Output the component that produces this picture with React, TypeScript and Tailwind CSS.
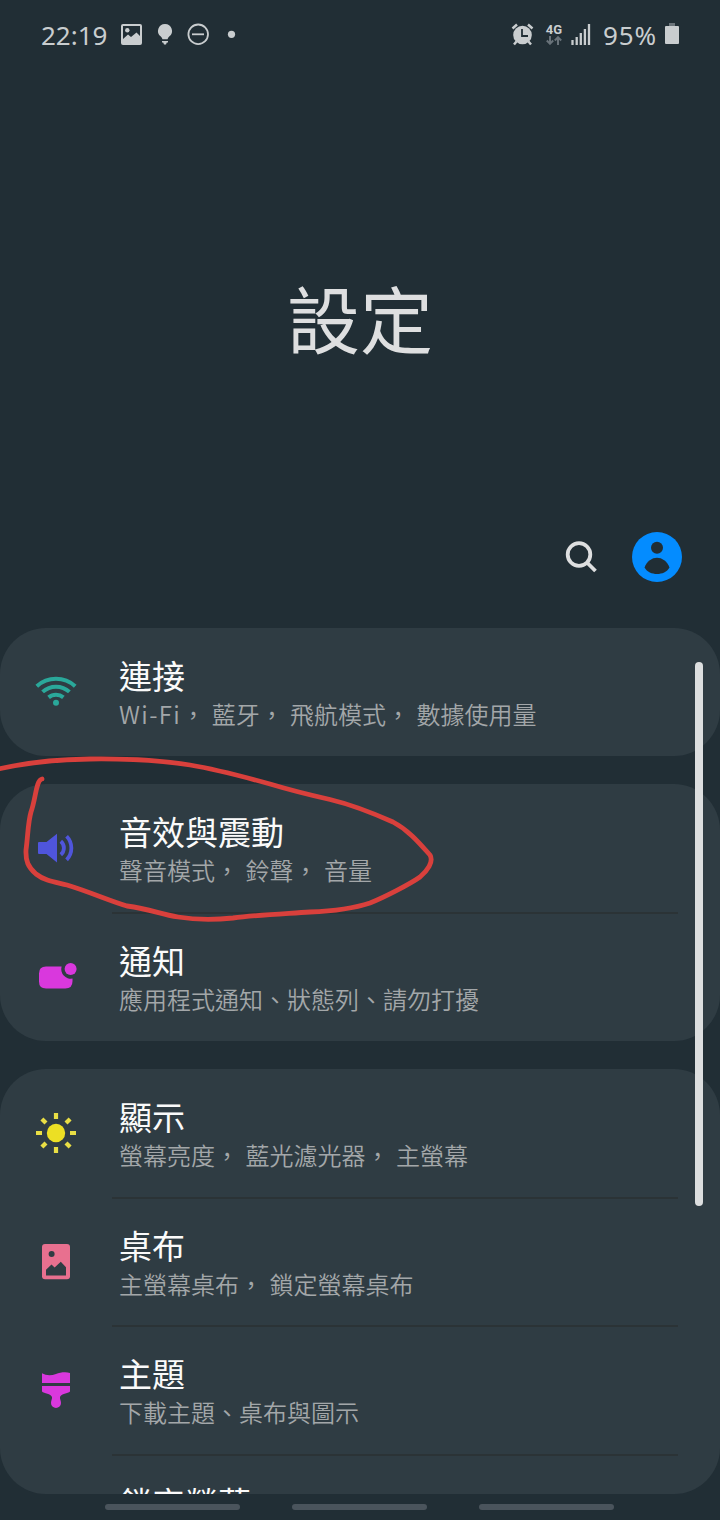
import type { ReactNode } from "react"

const WifiIcon = () => (
  <svg className="-mt-[4px]" width="44" height="34" viewBox="34 674 44 34" fill="none" stroke="#2aa89a" strokeWidth="4">
    <path d="M36.8 687.2 A28.5 28.5 0 0 1 75.2 687.2" />
    <path d="M42.6 692.9 A19.8 19.8 0 0 1 69.4 692.9" />
    <path d="M48.6 698.4 A11.5 11.5 0 0 1 63.4 698.4" />
    <circle cx="56" cy="703.8" r="3" fill="#2aa89a" stroke="none" />
  </svg>
)

const SoundIcon = () => (
  <svg width="44" height="32" viewBox="34 832 44 32">
    <path d="M39 842h7.5L57 833.8V862.4L46.5 854H39q-1 0-1-1v-10q0-1 1-1z" fill="#4f55dc" />
    <path d="M60.8 841.3a8.8 8.8 0 0 1 0 13.4M66.6 836.3a17 17 0 0 1 0 23.6" fill="none" stroke="#4f55dc" strokeWidth="3.8" />
  </svg>
)

const NotificationIcon = () => (
  <svg className="-mt-[2px]" width="44" height="32" viewBox="34 960 44 32" fill="#d938dd">
    <path d="M46 966.5H61.6A9.6 9.6 0 0 0 72.5 978.6V981.3Q72.5 988.5 65.3 988.5H46Q39 988.5 39 981.5V973.5Q39 966.5 46 966.5z" />
    <circle cx="70.6" cy="969" r="6" />
  </svg>
)

const DisplayIcon = () => (
  <svg width="44" height="44" viewBox="-22 -22 44 44" fill="#ecdf24">
    <circle r="9.2" />
    <g stroke="#e9de45" strokeWidth="4.2">
      <path d="M0-20V-14M0 14V20M-20 0H-14M14 0H20" />
      <path d="M-14.1-14.1L-10-10M10 10L14.1 14.1M-14.1 14.1L-10 10M10-10L14.1-14.1" />
    </g>
  </svg>
)

const WallpaperIcon = () => (
  <svg className="-mt-[2px]" width="32" height="38" viewBox="40 1242 32 38">
    <rect x="42" y="1244" width="28" height="35.3" rx="3" fill="#e8708f" />
    <circle cx="51.6" cy="1254" r="3" fill="#2f3c43" />
    <path d="M46 1275.5V1269.8L51.5 1264.5L54.6 1267.6L60.8 1261.8L66 1267.2V1275.5z" fill="#2f3c43" />
  </svg>
)

const ThemeIcon = () => (
  <svg className="-mt-[1px]" width="32" height="38" viewBox="40 1371 32 38" fill="#d938dd">
    <path d="M42 1373.3C46 1375.6 51 1375.8 56 1374C60 1372.4 66 1371.6 70 1373V1383H42z" />
    <path d="M42 1386H70V1391.5C68 1393.5 61 1393.7 60 1397C59.7 1399 61 1400.5 61 1403A5 5 0 0 1 51 1403C51 1400.5 52.3 1399 52 1397C51 1393.7 44 1393.5 42 1391.5z" />
  </svg>
)

type Item = { title: string; latin?: string; sub: string; icon?: ReactNode }

const groups: Item[][] = [
  [{ title: "連接", latin: "Wi-Fi", sub: "， 藍牙， 飛航模式， 數據使用量", icon: <WifiIcon /> }],
  [
    { title: "音效與震動", sub: "聲音模式， 鈴聲， 音量", icon: <SoundIcon /> },
    { title: "通知", sub: "應用程式通知、狀態列、請勿打擾", icon: <NotificationIcon /> },
  ],
  [
    { title: "顯示", sub: "螢幕亮度， 藍光濾光器， 主螢幕", icon: <DisplayIcon /> },
    { title: "桌布", sub: "主螢幕桌布， 鎖定螢幕桌布", icon: <WallpaperIcon /> },
    { title: "主題", sub: "下載主題、桌布與圖示", icon: <ThemeIcon /> },
    { title: "鎖定螢幕", sub: "" },
  ],
]

function Row({ item, last }: { item: Item; last: boolean }) {
  return (
    <div className="flex h-[128.5px] shrink-0">
      <div className="flex w-28 shrink-0 items-center justify-center">{item.icon}</div>
      <div className="flex flex-1 flex-col whitespace-nowrap pl-[7px] pt-[26px]">
        <div className="text-[33px] leading-[42px] text-[#fafafa]">{item.title}</div>
        <div className="text-[24px] font-[350] leading-[36px] text-[#a3a7a9] [word-spacing:1.1px]">
          {item.latin && <span className="tracking-[1.4px]">{item.latin}</span>}
          {item.sub}
        </div>
        {!last && <div className="-mb-px -ml-[7px] mr-[42px] mt-auto h-[2px] shrink-0 bg-[#2b3336]" />}
      </div>
    </div>
  )
}

function StatusBar() {
  return (
    <div className="flex h-[68px] shrink-0 items-center justify-between pl-[41px] pr-[41px] text-[#c9cdcf]">
      <div className="flex items-center">
        <span className="w-[79px] pt-[2px] font-['Noto_Sans'] text-[26px] leading-none">22:19</span>
        <svg width="116" height="26" viewBox="120 21 116 26" fill="#c9cdcf">
          <path fillRule="evenodd" d="M123 24H140Q142 24 142 26V43Q142 45 140 45H123Q121 45 121 43V26Q121 24 123 24zM123 26V39L128 34.5L131 37L136.500 32.500L140 36V26z" />
          <circle cx="127.3" cy="30.3" r="2.2" />
          <path d="M165 24a7 7 0 0 1 4.200 12.600q-1.200 1-1.700 2.600h-5q-.5-1.600-1.700-2.600A7 7 0 0 1 165 24zM162 41h6v1.500h-1.200l-.8 2h-2l-.8-2H162z" />
          <circle cx="198.200" cy="34.300" r="9.800" fill="none" stroke="#c9cdcf" strokeWidth="1.800" />
          <path d="M192 33.400h12v1.800h-12z" />
          <circle cx="231.500" cy="34.300" r="3.600" />
        </svg>
      </div>
      <div className="flex items-center">
        <svg width="24" height="26" viewBox="511 21 24 26">
          <circle cx="522.500" cy="35" r="9.300" fill="#c9cdcf" />
          <path d="M512.500 28.500L517 24.500M532.500 28.500L528 24.500M516.500 41.500L514 44.500M528.500 41.500L531 44.500" stroke="#c9cdcf" strokeWidth="2.500" />
          <path d="M522 29V36H528" fill="none" stroke="#212e35" strokeWidth="1.800" />
        </svg>
        <div className="ml-2.5 flex w-[18px] flex-col items-center">
          <span className="font-[Roboto] text-[13px] font-bold leading-[13px]">4G</span>
          <svg width="16" height="9" viewBox="0 0 16 9" fill="none" stroke="#687279" strokeWidth="2">
            <path d="M4 0V8M.8 4.500L4 7.700L7.200 4.500M12 9V1M8.800 4.500L12 1.300L15.200 4.500" />
          </svg>
        </div>
        <svg className="ml-2" width="20" height="22" viewBox="571 23 20 22">
          <path d="M572.500 40V45M576.700 37V45M580.800 33V45M584.900 29V45M589 24V45" stroke="#c9cdcf" strokeWidth="2.300" />
        </svg>
        <span className="ml-[12px] w-[62px] pt-[2px] font-['Noto_Sans'] text-[26px] leading-none tracking-[0.9px]">95%</span>
        <svg width="14" height="22" viewBox="0 0 14 22" fill="#c9cdcf">
          <path d="M4 0h6v3H4z" fill="#6b747a" />
          <rect y="3" width="14" height="18" rx="1" />
        </svg>
      </div>
    </div>
  )
}

export default function App() {
  return (
    <div className="relative flex h-[1520px] w-[720px] flex-col overflow-hidden bg-[#212e35] font-['Noto_Sans_CJK_TC',sans-serif]" lang="zh-TW">
      <StatusBar />

      <h1 className="flex h-[452px] shrink-0 items-center justify-center pt-[44px] text-[73px] font-normal leading-[104px] text-[#dedfe0]">
        設定
      </h1>

      {/* Search and account */}
      <div className="flex h-[107.5px] shrink-0 items-start justify-end gap-[35px] pr-[38px] pt-[12px]">
        <svg width="32" height="50" viewBox="565 532 32 50" fill="none" stroke="#dedfe0" strokeWidth="3.8">
          <circle cx="579" cy="554.5" r="11.3" />
          <path d="M587 562.5L595.5 571" />
        </svg>
        <svg width="50" height="50" viewBox="632 532 50 50" fill="#212e35">
          <circle cx="657" cy="557" r="25" fill="#048cff" />
          <circle cx="657" cy="547.7" r="6" />
          <path d="M644.5 567.5C647 561 652 557.7 657 557.7S667 561 669.500 567.500C667 572 662 574 657 574S647 572 644.500 567.500z" />
        </svg>
      </div>

      {/* Settings list */}
      <main className="flex h-[866px] shrink-0 flex-col gap-7 overflow-hidden rounded-b-[46px]">
        {groups.map((items, i) => (
          <section key={i} className="shrink-0 rounded-[46px] bg-[#2f3c43]">
            {items.map((item, j) => (
              <Row key={item.title} item={item} last={j === items.length - 1} />
            ))}
          </section>
        ))}
      </main>

      <nav className="flex flex-1 gap-[52px] pl-[105px] pt-[10px]">
        <span className="h-[6px] w-[135px] rounded-full bg-[#4a545c]" />
        <span className="h-[6px] w-[135px] rounded-full bg-[#4a545c]" />
        <span className="h-[6px] w-[135px] rounded-full bg-[#4a545c]" />
      </nav>

      <div className="absolute left-[695px] top-[662px] h-[544px] w-[8px] rounded-full bg-[#dcdedf]" />

      {/* Hand-drawn marker */}
      <svg className="absolute left-0 top-[740px]" width="450" height="200" viewBox="0 740 450 200" fill="none" stroke="#d9403c" strokeWidth="4.8" strokeLinecap="round" strokeLinejoin="round">
        <path d="M-4 769.5C20 764 50 759.500 90 759C130 758.500 165 761 190 765C220 770 245 777 270 784C290 790 310 795 330 799.500C353 805 375 814 393 822C410 831 421 845 430 855C434 862 427 871 420 877C410 884 385 897 370 903C355 908 335 911 310 912C280 914 255 915 233 918C210 920.500 190 919 178 917C160 914 150 909 127 906C110 901 90 892 67 885C55 882 45 881 36 874C28 867 25.500 861 26 850C28 835 28 822 31 812C36 798 36 780 42 779" />
      </svg>
    </div>
  )
}
